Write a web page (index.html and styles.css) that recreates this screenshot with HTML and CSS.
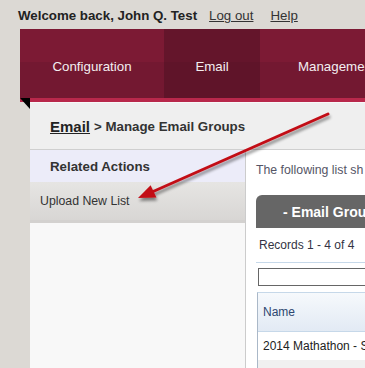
FILE: index.html
```html
<!DOCTYPE html>
<html>
<head>
  <meta name="viewport" content="width=device-width, initial-scale=1">
  <link rel="stylesheet" href="styles.css">
  <title>Manage Email Groups</title>
</head>
<body>

<div class="topBar">
  <span class="welcome">Welcome back, John Q. Test</span>
  <a class="topLink" href="#">Log out</a>
  <a class="topLink" href="#">Help</a>
</div>

<div class="navWrap">
  <div class="nav">
    <div class="tab tabConfig">Configuration</div>
    <div class="tab tabEmail active">Email</div>
    <div class="tab tabManage">Management</div>
  </div>
  <div class="navEdge"></div>
  <div class="fold"></div>
</div>

<div class="page">
  <div class="crumbs">
    <a class="crumbLink" href="#">Email</a> &gt; Manage Email Groups
  </div>
  <div class="columns">
    <div class="sidebar">
      <div class="sideHead">Related Actions</div>
      <div class="sideItem">Upload New List</div>
    </div>
    <div class="main">
      <div class="intro">The following list sh</div>
      <div class="groupBox">- Email Grou</div>
      <div class="records">Records 1 - 4 of 4</div>
      <div class="filterRow"><input class="filter" type="text"></div>
      <div class="grid">
        <div class="gridHead">Name</div>
        <div class="gridRow">2014 Mathathon - S</div>
        <div class="gridRow alt"></div>
      </div>
    </div>
  </div>
</div>

<!-- annotation arrow drawn over the screenshot -->
<svg class="arrow" width="365" height="368" viewBox="0 0 365 368">
  <defs>
    <filter id="drop" x="-20%" y="-20%" width="140%" height="140%">
      <feGaussianBlur in="SourceAlpha" stdDeviation="1.6"/>
      <feOffset dx="1" dy="3" result="blur"/>
      <feComponentTransfer><feFuncA type="linear" slope="0.45"/></feComponentTransfer>
      <feMerge><feMergeNode/><feMergeNode in="SourceGraphic"/></feMerge>
    </filter>
  </defs>
  <g filter="url(#drop)">
    <line x1="328" y1="114" x2="152" y2="192" stroke="#c20d15" stroke-width="3" stroke-linecap="round"/>
    <polygon points="138,198 150.6,185.2 156.4,197.6" fill="#c20d15"/>
  </g>
</svg>

</body>
</html>
```

FILE: styles.css
```css
html, body {
  margin: 0;
  height: 100%;
}

body {
  background-color: #dcd9d4;
  font-family: "Liberation Sans", Arial, sans-serif;
  color: #222222;
  overflow: hidden;
  position: relative;
  width: 365px;
}

.topBar {
  height: 27px;
  padding: 2px 0 0 18px;
  display: flex;
  align-items: center;
  font-size: 13.3px;
  white-space: nowrap;
}

.welcome {
  font-weight: bold;
  color: #222222;
}

.topLink {
  color: #333333;
  margin-left: 7px;
  padding: 0 5px;
}

.navWrap {
  position: relative;
  margin-left: 20px;
}

.nav {
  display: flex;
  height: 69px;
  background: linear-gradient(to bottom, #7c1a34 0, #7c1a34 48%, #731831 48%, #731831 100%);
  white-space: nowrap;
  overflow: hidden;
}

.tab {
  flex-shrink: 0;
  display: flex;
  align-items: center;
  padding-top: 5px;
  color: #f4eef0;
  font-size: 13.3px;
}

.tabConfig {
  width: 144px;
  justify-content: center;
}

.tabEmail {
  width: 96px;
  justify-content: center;
}

.tabManage {
  padding-left: 38px;
}

.active {
  background: linear-gradient(to bottom, #64152b 0, #64152b 48%, #5f1429 48%, #5f1429 100%);
}

.navEdge {
  height: 4px;
  background-color: #b8284b;
}

.fold {
  position: absolute;
  left: 0;
  top: 69px;
  width: 0;
  height: 0;
  border-top: 11px solid #000000;
  border-left: 10px solid transparent;
}

.page {
  margin-left: 30px;
  width: 420px;
  background-color: #f8f8f8;
}

.crumbs {
  height: 46px;
  padding-left: 20px;
  display: flex;
  align-items: center;
  gap: 4px;
  background-color: #efefef;
  border-top: 1px solid #f8f8f8;
  border-bottom: 1px solid #cfcfcf;
  font-size: 13.3px;
  font-weight: bold;
  color: #333333;
  white-space: nowrap;
}

.crumbLink {
  font-size: 15px;
  color: #222222;
  text-decoration: underline;
}

.columns {
  display: flex;
  height: 230px;
}

.sidebar {
  flex-shrink: 0;
  width: 215px;
  border-right: 1px solid #cccccc;
  background-color: #f8f8f8;
}

.sideHead {
  height: 32px;
  padding-left: 20px;
  display: flex;
  align-items: center;
  background-color: #ececf9;
  font-size: 13.3px;
  font-weight: bold;
  color: #333333;
}

.sideItem {
  height: 38px;
  padding-left: 10px;
  display: flex;
  align-items: center;
  background: linear-gradient(to bottom, #e6e5e3, #d8d6d4);
  border-bottom: 3px solid #d3d1cf;
  font-size: 12.3px;
  color: #333333;
}

.main {
  flex: 1;
  min-width: 0;
  background-color: #ffffff;
  padding-left: 10px;
  white-space: nowrap;
  overflow: hidden;
}

.intro {
  height: 39px;
  display: flex;
  align-items: center;
  font-size: 12.3px;
  color: #555566;
}

.groupBox {
  height: 33px;
  margin-top: 6px;
  padding-left: 27px;
  display: flex;
  align-items: center;
  background-color: #666666;
  border-top-left-radius: 6px;
  color: #ffffff;
  font-size: 14px;
  font-weight: bold;
}

.records {
  height: 34px;
  padding-left: 3px;
  display: flex;
  align-items: center;
  border-bottom: 1px solid #c6d8e9;
  font-size: 12px;
  color: #333344;
}

.filterRow {
  padding: 5px 0 0 2px;
  height: 20px;
}

.filter {
  display: block;
  box-sizing: border-box;
  width: 200px;
  height: 18px;
  margin: 0;
  border: 1px solid #666666;
  background-color: #ffffff;
}

.grid {
  margin-top: 4px;
  margin-left: 1px;
  border-left: 1px solid #aab8c8;
  border-top: 1px solid #c6d8e9;
}

.gridHead {
  height: 38px;
  padding-left: 5px;
  display: flex;
  align-items: center;
  background: linear-gradient(to bottom, #f6f9fc, #e2eaf4);
  border-bottom: 1px solid #c6d8e9;
  font-size: 12px;
  color: #2e4770;
}

.gridRow {
  height: 28px;
  padding-left: 5px;
  display: flex;
  align-items: center;
  background-color: #ffffff;
  font-size: 12px;
  color: #222222;
}

.alt {
  background-color: #f0f0f0;
}

.arrow {
  position: absolute;
  left: 0;
  top: 0;
  pointer-events: none;
}
```
